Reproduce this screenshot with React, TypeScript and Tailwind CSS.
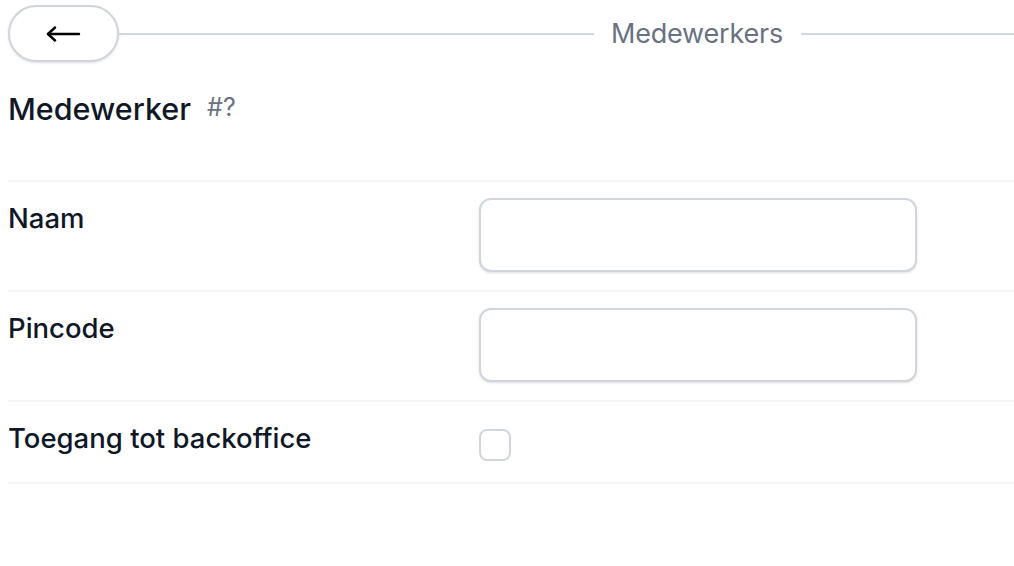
import { useState } from 'react';

function BackArrow() {
  return (
    <svg width="35" height="16" viewBox="0 0 35 16" fill="none" stroke="black" strokeWidth="2.4" strokeLinecap="round" strokeLinejoin="round">
      <path d="M2 8 H33" />
      <path d="M9 1.5 L2 8 L9 14.5" />
    </svg>
  );
}

function FieldRow({ label, children }: { label: string; children: React.ReactNode }) {
  return (
    <div className="flex border-t-2 border-gray-100 pb-[18px] pt-4">
      <div className="w-[471px] shrink-0 text-[27.5px] font-medium leading-10 text-gray-900">{label}</div>
      <div className="flex-1">{children}</div>
    </div>
  );
}

export default function App() {
  const [name, setName] = useState('');
  const [pin, setPin] = useState('');
  const [backoffice, setBackoffice] = useState(false);

  return (
    <div className="min-h-screen bg-white pl-2 font-['Inter','Liberation_Sans',sans-serif]">
      <div className="mt-[5px] flex h-[57px] items-center">
        <button
          type="button"
          aria-label="Terug"
          className="flex h-[57px] w-[111px] shrink-0 items-center justify-center rounded-full border-2 border-gray-300 bg-white shadow-sm"
        >
          <BackArrow />
        </button>
        <div className="h-[2px] flex-1 bg-gray-300" />
        <span className="pl-[17px] pr-[18px] text-[27px] leading-9 tracking-[-0.2px] text-gray-500">Medewerkers</span>
        <div className="h-[2px] w-[213px] bg-gray-300" />
      </div>

      <div className="mt-[29px] flex items-start pb-[53px]">
        <h1 className="text-[30.5px] font-medium leading-9 text-gray-900">Medewerker</h1>
        <span className="ml-4 mt-1 text-[25px] leading-6 text-gray-500">#?</span>
      </div>

      <FieldRow label="Naam">
        <input
          value={name}
          onChange={(e) => setName(e.target.value)}
          className="block h-[74px] w-[438px] rounded-xl border-2 border-gray-300 bg-white px-4 text-[28px] shadow-sm outline-none"
        />
      </FieldRow>
      <FieldRow label="Pincode">
        <input
          value={pin}
          onChange={(e) => setPin(e.target.value)}
          className="block h-[74px] w-[438px] rounded-xl border-2 border-gray-300 bg-white px-4 text-[28px] shadow-sm outline-none"
        />
      </FieldRow>
      <FieldRow label="Toegang tot backoffice">
        <div className="h-[46px] pt-[11px]">
          <button
            type="button"
            role="checkbox"
            aria-checked={backoffice}
            onClick={() => setBackoffice(!backoffice)}
            className="block h-[32px] w-[32px] rounded-lg border-2 border-gray-300 bg-white"
          />
        </div>
      </FieldRow>
      <div className="border-t-2 border-gray-100" />
    </div>
  );
}
